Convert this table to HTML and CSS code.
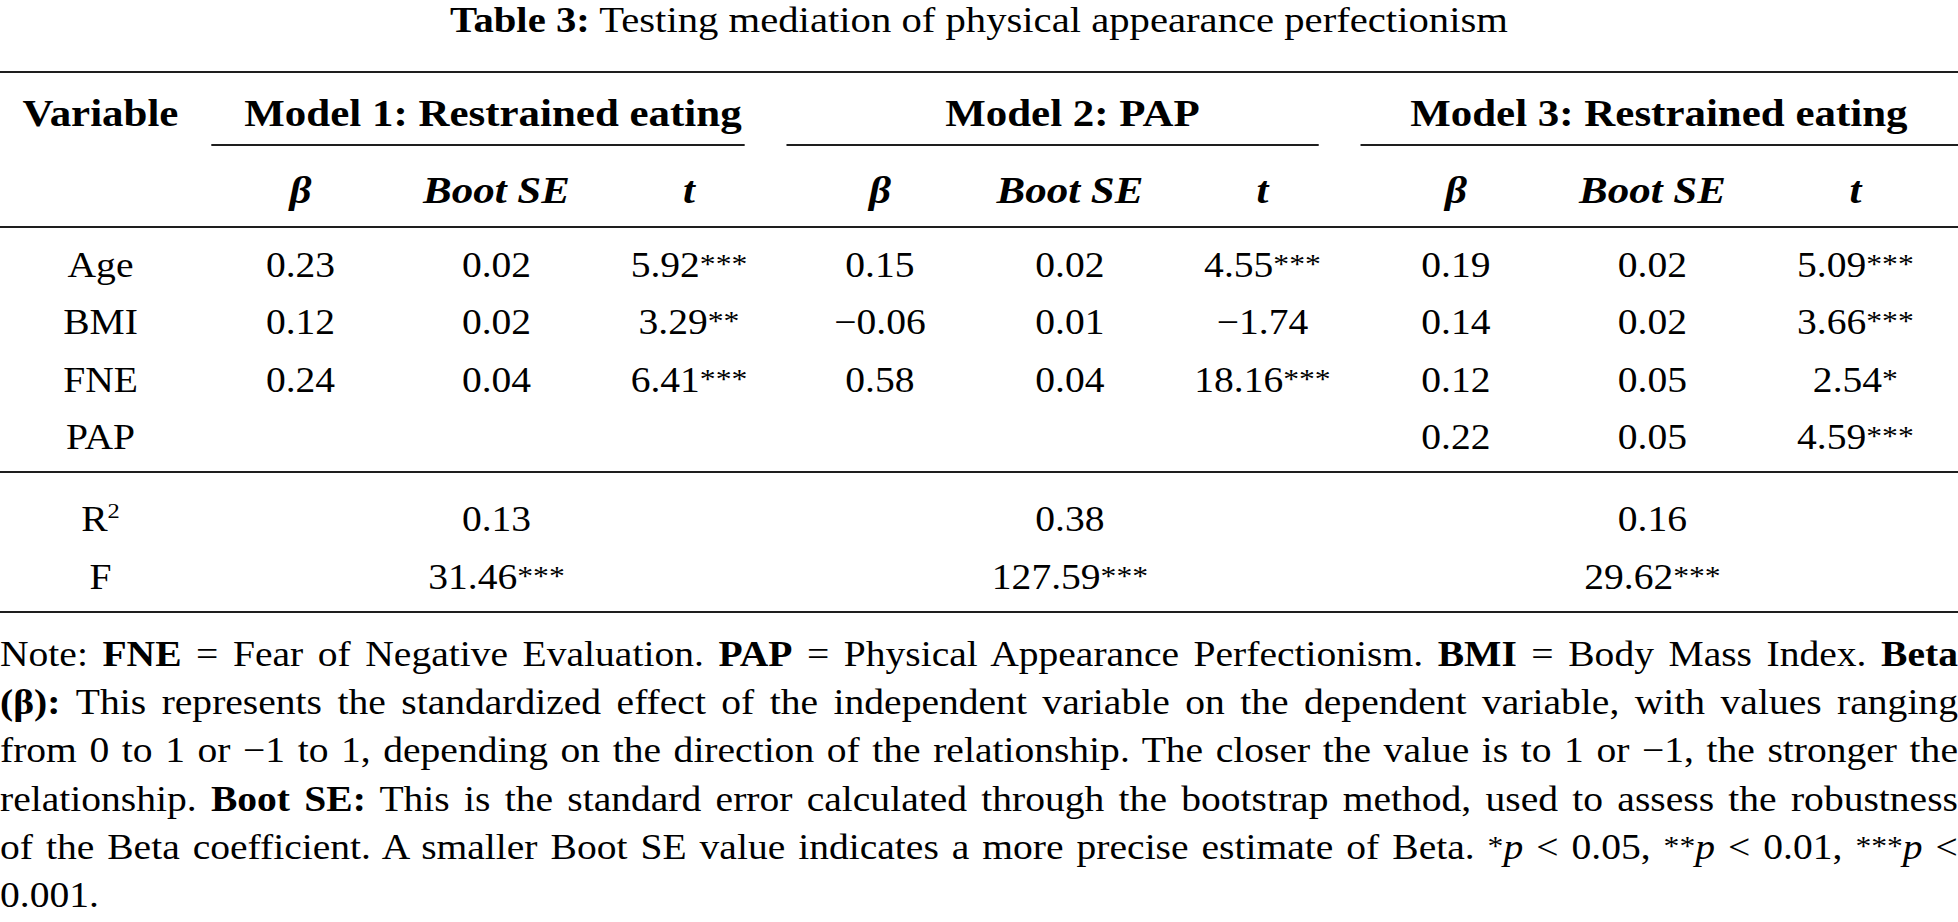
FILE: index.html
```html
<!DOCTYPE html>
<html lang="en">
<head>
<meta charset="utf-8">
<title>Table 3</title>
<link rel="stylesheet" href="styles.css">
</head>
<body>
<div class="sheet">
  <div class="caption"><b>Table 3:</b> Testing mediation of physical appearance perfectionism</div>

  <div class="thead">
    <div class="grid hrow1">
      <div class="hcell">Variable</div>
      <div class="group g1"><div class="gtitle">Model 1: Restrained eating</div><div class="grule"></div></div>
      <div class="group g2"><div class="gtitle">Model 2: PAP</div><div class="grule"></div></div>
      <div class="group g3"><div class="gtitle">Model 3: Restrained eating</div><div class="grule"></div></div>
    </div>
    <div class="grid hrow2">
      <div></div>
      <div>β</div><div>Boot SE</div><div>t</div>
      <div>β</div><div>Boot SE</div><div>t</div>
      <div>β</div><div>Boot SE</div><div>t</div>
    </div>
  </div>

  <div class="tbody">
    <div class="grid drow">
      <div>Age</div>
      <div>0.23</div><div>0.02</div><div>5.92<span class="sig">***</span></div>
      <div>0.15</div><div>0.02</div><div>4.55<span class="sig">***</span></div>
      <div>0.19</div><div>0.02</div><div>5.09<span class="sig">***</span></div>
    </div>
    <div class="grid drow">
      <div>BMI</div>
      <div>0.12</div><div>0.02</div><div>3.29<span class="sig">**</span></div>
      <div>−0.06</div><div>0.01</div><div>−1.74</div>
      <div>0.14</div><div>0.02</div><div>3.66<span class="sig">***</span></div>
    </div>
    <div class="grid drow">
      <div>FNE</div>
      <div>0.24</div><div>0.04</div><div>6.41<span class="sig">***</span></div>
      <div>0.58</div><div>0.04</div><div>18.16<span class="sig">***</span></div>
      <div>0.12</div><div>0.05</div><div>2.54<span class="sig">*</span></div>
    </div>
    <div class="grid drow">
      <div>PAP</div>
      <div></div><div></div><div></div>
      <div></div><div></div><div></div>
      <div>0.22</div><div>0.05</div><div>4.59<span class="sig">***</span></div>
    </div>
  </div>

  <div class="tfoot">
    <div class="grid srow">
      <div>R<sup class="sq">2</sup></div>
      <div class="c3">0.13</div>
      <div class="c6">0.38</div>
      <div class="c9">0.16</div>
    </div>
    <div class="grid srow">
      <div>F</div>
      <div class="c3">31.46<span class="sig">***</span></div>
      <div class="c6">127.59<span class="sig">***</span></div>
      <div class="c9">29.62<span class="sig">***</span></div>
    </div>
  </div>

  <div class="note">
    <span class="line">Note: <b>FNE</b> = Fear of Negative Evaluation. <b>PAP</b> = Physical Appearance Perfectionism. <b>BMI</b> = Body Mass Index. <b>Beta</b></span>
    <span class="line"><b>(β):</b> This represents the standardized effect of the independent variable on the dependent variable, with values ranging</span>
    <span class="line">from 0 to 1 or −1 to 1, depending on the direction of the relationship. The closer the value is to 1 or −1, the stronger the</span>
    <span class="line">relationship. <b>Boot SE:</b> This is the standard error calculated through the bootstrap method, used to assess the robustness</span>
    <span class="line">of the Beta coefficient. A smaller Boot SE value indicates a more precise estimate of Beta. <span class="sig">*</span><i>p</i> &lt; 0.05, <span class="sig">**</span><i>p</i> &lt; 0.01, <span class="sig">***</span><i>p</i> &lt;</span>
    <span class="line last">0.001.</span>
  </div>
</div>
</body>
</html>
```

FILE: styles.css
```css
html, body {
  margin: 0;
  padding: 0;
  background: #ffffff;
}

body {
  overflow: hidden;
}

.sheet {
  width: 1732.7px;
  transform: scaleX(1.13);
  transform-origin: 0 0;
  font-family: "Liberation Serif", "Times New Roman", serif;
  font-size: 35px;
  color: #000;
}

.caption {
  font-size: 36px;
  line-height: 40.5px;
  text-align: center;
  margin-bottom: 30.5px;
}

.grid {
  display: grid;
  grid-template-columns: 177.9px 176.1px 170.8px 169.9px 168.1px 168.2px 172.5px 170px 177.8px 181.4px;
  text-align: center;
}

.thead {
  border-top: 2px solid #1e1e1e;
  border-bottom: 2px solid #1e1e1e;
  font-weight: bold;
  font-size: 38px;
}

.hrow1 .hcell {
  padding-top: 11.34px;
  line-height: 59.66px;
}

.group {
  grid-column: span 3;
  display: flex;
  flex-direction: column;
}

.gtitle {
  padding-top: 11.34px;
  line-height: 59.66px;
}

.grule {
  height: 2px;
  background: #1e1e1e;
}

.g1 .grule { margin: 0 36px 0 9.6px; }
.g2 .grule { margin: 0 36px 0 1px; }
.g3 .grule { margin: 0 0 0 1px; }

.hrow2 {
  font-style: italic;
  line-height: 69.66px;
  padding-top: 10.34px;
}

.tbody {
  padding-top: 8.94px;
  padding-bottom: 4.06px;
  border-bottom: 2px solid #1e1e1e;
}

.drow {
  line-height: 57.5px;
}

.tfoot {
  padding-top: 18.19px;
  padding-bottom: 3.81px;
  border-bottom: 2px solid #1e1e1e;
}

.srow {
  line-height: 58px;
}

.c3 { grid-column: 3; }
.c6 { grid-column: 6; }
.c9 { grid-column: 9; }

.sig {
  font-size: 0.8em;
  vertical-align: 0.14em;
  line-height: 0;
}

.sq {
  font-size: 0.62em;
  line-height: 0;
  vertical-align: 0.62em;
}

.note {
  margin-top: 18.1px;
  line-height: 48.2px;
}

.line {
  display: block;
  text-align: justify;
  text-align-last: justify;
}

.line.last {
  text-align-last: left;
}
```
